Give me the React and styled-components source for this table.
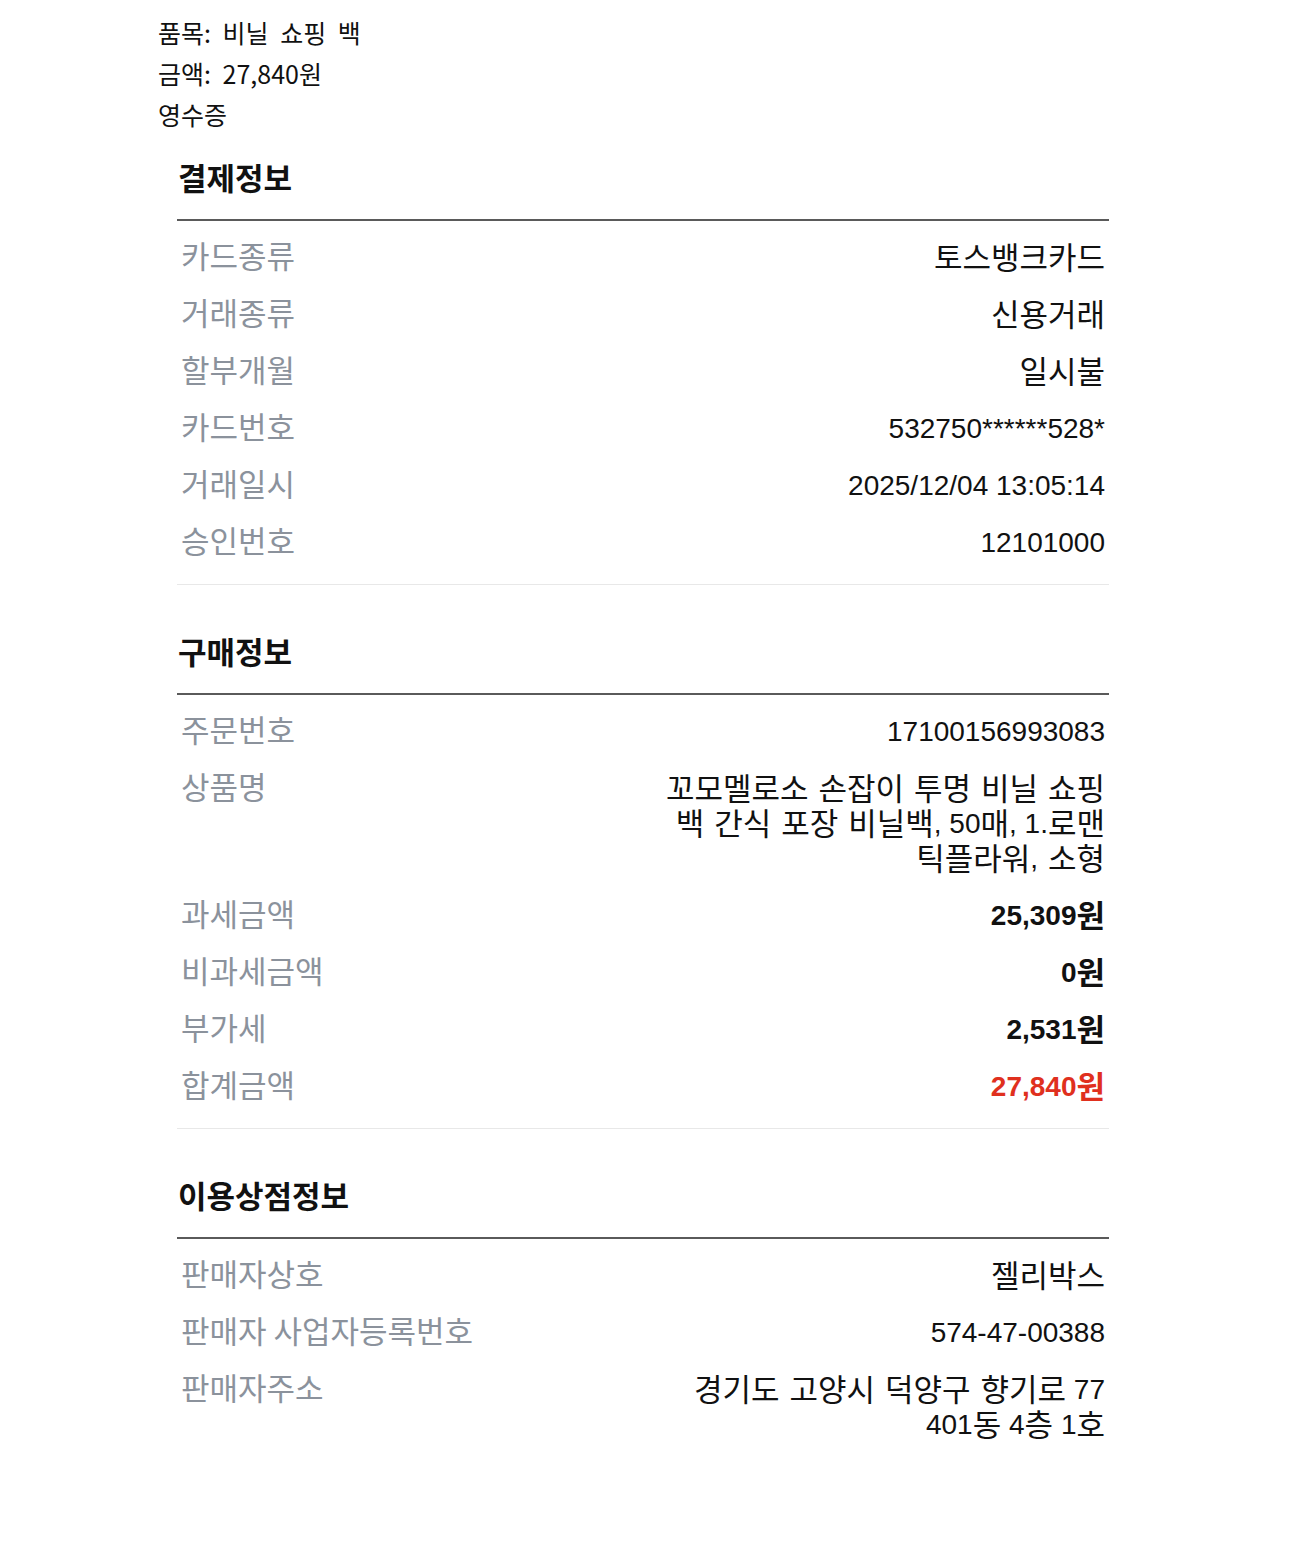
import styled, { createGlobalStyle } from 'styled-components'

const GlobalStyle = createGlobalStyle`
  body {
    margin: 0;
    background: #ffffff;
    font-family: "Liberation Sans", "Noto Sans CJK KR", sans-serif;
  }
`

const payment = [
  { label: '카드종류', value: '토스뱅크카드' },
  { label: '거래종류', value: '신용거래' },
  { label: '할부개월', value: '일시불' },
  { label: '카드번호', value: '532750******528*' },
  { label: '거래일시', value: '2025/12/04 13:05:14' },
  { label: '승인번호', value: '12101000' },
]

const purchase = [
  { label: '주문번호', value: '17100156993083' },
  {
    label: '상품명',
    value: ['꼬모멜로소 손잡이 투명 비닐 쇼핑', '백 간식 포장 비닐백, 50매, 1.로맨', '틱플라워, 소형'],
  },
  { label: '과세금액', value: '25,309원', strong: true },
  { label: '비과세금액', value: '0원', strong: true },
  { label: '부가세', value: '2,531원', strong: true },
  { label: '합계금액', value: '27,840원', strong: true, accent: true },
]

const store = [
  { label: '판매자상호', value: '젤리박스' },
  { label: '판매자 사업자등록번호', value: '574-47-00388' },
  { label: '판매자주소', value: ['경기도 고양시 덕양구 향기로 77', '401동 4층 1호'] },
]

// hangul runs get a slightly larger size so they sit like the receipt font next to Arial digits
function Mixed({ text }) {
  return text
    .split(/([\uac00-\ud7a3\s]*[\uac00-\ud7a3]+)/)
    .filter(Boolean)
    .map((part, i) =>
      /[\uac00-\ud7a3]/.test(part) ? <Hangul key={i}>{part}</Hangul> : <span key={i}>{part}</span>
    )
}

function Section({ title, rows, last }) {
  return (
    <Block>
      <Heading>{title}</Heading>
      <List $last={last}>
        {rows.map((row) => (
          <Row key={row.label}>
            <Label>{row.label}</Label>
            <Value $strong={row.strong} $accent={row.accent}>
              {Array.isArray(row.value) ? (
                row.value.map((line) => (
                  <Line key={line}>
                    <Mixed text={line} />
                  </Line>
                ))
              ) : (
                <Mixed text={row.value} />
              )}
            </Value>
          </Row>
        ))}
      </List>
    </Block>
  )
}

export default function App() {
  return (
    <Page>
      <GlobalStyle />
      <Summary>
        <SummaryLine>품목: 비닐 쇼핑 백</SummaryLine>
        <SummaryLine>금액: 27,840원</SummaryLine>
        <SummaryLine>영수증</SummaryLine>
      </Summary>
      <Receipt>
        <Section title='결제정보' rows={payment} />
        <Section title='구매정보' rows={purchase} />
        <Section title='이용상점정보' rows={store} last />
      </Receipt>
    </Page>
  )
}

const Page = styled.div`
  padding: 12px 0 100px 158px;
`

const Summary = styled.div`
  font-family: "Noto Sans CJK KR", sans-serif;
  font-size: 25px;
  color: #111111;
`

const SummaryLine = styled.div`
  line-height: 41px;
  height: 41px;
  word-spacing: 6px;
`

const Receipt = styled.div`
  width: 932px;
  margin: 25px 0 0 19px;
`

const Block = styled.section`
  & + & {
    margin-top: 49px;
  }
`

const Heading = styled.h2`
  margin: 0;
  padding-left: 1px;
  font-family: "Noto Sans CJK KR", sans-serif;
  font-size: 31px;
  font-weight: 700;
  line-height: 33px;
  color: #111111;
  padding-bottom: 26px;
  border-bottom: 2px solid #5a5a5a;
`

const List = styled.div`
  padding: 8px 0 13px;
  border-bottom: ${(p) => (p.$last ? 'none' : '1px solid #e8e8e8')};
`

const Row = styled.div`
  display: flex;
  justify-content: space-between;
  align-items: flex-start;
  padding: 11px 4px;
  font-size: 28px;
  line-height: 35px;
`

const Label = styled.div`
  flex-shrink: 0;
  height: 35px;
  line-height: 30px;
  color: #8b929c;
  font-family: "Noto Sans CJK KR", sans-serif;
  font-size: 31px;
`

const Value = styled.div`
  text-align: right;
  color: ${(p) => (p.$accent ? '#e0301e' : '#111111')};
  font-weight: ${(p) => (p.$strong ? 700 : 400)};
`

const Hangul = styled.span`
  font-family: "Noto Sans CJK KR", sans-serif;
  font-size: 31px;
  line-height: 0;
  vertical-align: -2px;
  word-spacing: 3px;
`

const Line = styled.div`
  height: 35px;
`
